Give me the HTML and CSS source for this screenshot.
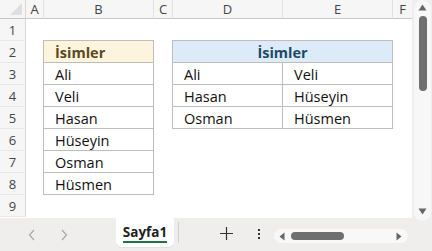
FILE: index.html
```html
<!DOCTYPE html>
<html lang="tr">
<head>
  <meta charset="UTF-8">
  <title>Sayfa1</title>
  <link rel="stylesheet" href="styles.css">
</head>
<body>

  <div class="main">
    <div class="sheet">
      <div class="corner"><span class="corner-tri"></span></div>
      <div class="colhead">A</div>
      <div class="colhead">B</div>
      <div class="colhead">C</div>
      <div class="colhead">D</div>
      <div class="colhead">E</div>
      <div class="colhead last">F</div>

      <div class="rowhead" style="grid-row: 2">1</div>
      <div class="rowhead" style="grid-row: 3">2</div>
      <div class="rowhead" style="grid-row: 4">3</div>
      <div class="rowhead" style="grid-row: 5">4</div>
      <div class="rowhead" style="grid-row: 6">5</div>
      <div class="rowhead" style="grid-row: 7">6</div>
      <div class="rowhead" style="grid-row: 8">7</div>
      <div class="rowhead" style="grid-row: 9">8</div>
      <div class="rowhead" style="grid-row: 10">9</div>

      <div class="list">
        <div class="cell head-yellow">İsimler</div>
        <div class="cell">Ali</div>
        <div class="cell">Veli</div>
        <div class="cell">Hasan</div>
        <div class="cell">Hüseyin</div>
        <div class="cell">Osman</div>
        <div class="cell">Hüsmen</div>
      </div>

      <div class="table2">
        <div class="cell head-blue">İsimler</div>
        <div class="cell">Ali</div>
        <div class="cell">Veli</div>
        <div class="cell">Hasan</div>
        <div class="cell">Hüseyin</div>
        <div class="cell">Osman</div>
        <div class="cell">Hüsmen</div>
      </div>
    </div>

    <div class="vscroll">
      <div class="vtrack">
        <svg class="tri" width="9" height="7" viewBox="0 0 9 7"><path d="M4.5 0.5 L8.5 6.5 L0.5 6.5 Z" fill="#666"/></svg>
        <div class="vthumb"></div>
        <div class="vspace"></div>
        <svg class="tri" width="9" height="7" viewBox="0 0 9 7"><path d="M0.5 0.5 L8.5 0.5 L4.5 6.5 Z" fill="#666"/></svg>
      </div>
    </div>
  </div>

  <div class="bottombar">
    <div class="navs">
      <svg width="8" height="12" viewBox="0 0 8 12"><path d="M6 1 L1.5 6 L6 11" fill="none" stroke="#a8a8a8" stroke-width="1.2"/></svg>
      <svg width="8" height="12" viewBox="0 0 8 12"><path d="M2 1 L6.5 6 L2 11" fill="none" stroke="#a8a8a8" stroke-width="1.2"/></svg>
    </div>
    <div class="tab"><span>Sayfa1</span></div>
    <div class="sep"></div>
    <div class="plus">
      <svg width="13" height="13" viewBox="0 0 13 13"><path d="M6.5 0 V13 M0 6.5 H13" stroke="#333" stroke-width="1.2"/></svg>
    </div>
    <div class="dots">
      <span></span><span></span><span></span>
    </div>
    <div class="hscroll">
      <svg width="6" height="9" viewBox="0 0 6 9"><path d="M5.5 0.5 L5.5 8.5 L0.5 4.5 Z" fill="#666"/></svg>
      <div class="hthumb"></div>
      <div class="hspace"></div>
      <svg width="6" height="9" viewBox="0 0 6 9"><path d="M0.5 0.5 L5.5 4.5 L0.5 8.5 Z" fill="#666"/></svg>
    </div>
  </div>

</body>
</html>
```

FILE: styles.css
```css
body {
  margin: 0;
  padding: 0;
  width: 432px;
  height: 251px;
  overflow: hidden;
  font-family: 'Open Sans', 'Noto Sans', sans-serif;
  background: #efeeed;
}

.main {
  display: flex;
  height: 218px;
}

.sheet {
  width: 412px;
  height: 218px;
  background: #ffffff;
  display: grid;
  grid-template-columns: 26px 18px 110px 19px 110px 110px 19px;
  grid-template-rows: 19px repeat(9, 22px);
  align-content: start;
}

.corner {
  grid-row: 1;
  grid-column: 1;
  background: #f6f6f6;
  border-right: 1px solid #d6d6d6;
  border-bottom: 1px solid #c8c8c8;
  position: relative;
}

.corner-tri {
  position: absolute;
  right: 3px;
  bottom: 3px;
  width: 0;
  height: 0;
  border-left: 12px solid transparent;
  border-bottom: 12px solid #dedede;
}

.colhead {
  grid-row: 1;
  background: #f6f6f6;
  border-right: 1px solid #e0e0e0;
  border-bottom: 1px solid #c8c8c8;
  font-size: 13px;
  color: #444;
  display: flex;
  align-items: center;
  justify-content: center;
  line-height: 1;
}

.colhead.last {
  border-right: none;
}

.rowhead {
  grid-column: 1;
  background: #f6f6f6;
  border-right: 1px solid #d6d6d6;
  border-bottom: 1px solid #e8e8e8;
  font-size: 13px;
  color: #444;
  display: flex;
  align-items: center;
  justify-content: center;
}

.list {
  grid-column: 3;
  grid-row: 3 / 10;
  display: grid;
  grid-template-rows: repeat(7, 22px);
  border-left: 1px solid #bdbdbd;
  border-top: 1px solid #bdbdbd;
  margin-top: -1px;
  margin-left: -1px;
}

.table2 {
  grid-column: 5 / 7;
  grid-row: 3 / 7;
  display: grid;
  grid-template-columns: 110px 110px;
  grid-template-rows: repeat(4, 22px);
  border-left: 1px solid #bdbdbd;
  border-top: 1px solid #bdbdbd;
  margin-top: -1px;
  margin-left: -1px;
}

.cell {
  border-right: 1px solid #bdbdbd;
  border-bottom: 1px solid #bdbdbd;
  padding-left: 11px;
  font-size: 14.5px;
  color: #111;
  display: flex;
  align-items: center;
  padding-top: 1px;
}

.head-yellow {
  background: #fcf4dc;
  color: #5a4a1e;
  font-weight: bold;
}

.head-blue {
  grid-column: 1 / 3;
  background: #dcebf7;
  color: #1c4a66;
  font-weight: bold;
  justify-content: center;
  padding-left: 0;
}

.vscroll {
  width: 20px;
  height: 218px;
  background: #efeeed;
  display: flex;
  justify-content: center;
}

.vtrack {
  width: 17px;
  height: 221px;
  margin-left: 1px;
  background: #f7f7f7;
  border-radius: 9px;
  display: flex;
  flex-direction: column;
  align-items: center;
  padding-top: 4px;
  box-sizing: border-box;
}

.tri {
  flex-shrink: 0;
}

.vthumb {
  width: 8px;
  height: 75px;
  margin-top: 5px;
  background: #6f6f6f;
  border-radius: 4px;
}

.vspace {
  flex: 1;
}

.vtrack svg:last-child {
  margin-bottom: 6px;
}

.bottombar {
  height: 33px;
  display: flex;
  align-items: flex-start;
}

.navs {
  display: flex;
  gap: 24px;
  margin-left: 28px;
  width: 88px;
  padding-top: 11px;
}

.navs svg,
.plus svg,
.hscroll svg {
  display: block;
}

.tab {
  width: 58px;
  height: 29px;
  background: #ffffff;
  border-radius: 0 0 6px 6px;
  display: flex;
  justify-content: center;
  box-shadow: 0 1px 1px rgba(0, 0, 0, 0.06);
}

.tab span {
  font-size: 13.5px;
  font-weight: bold;
  color: #222;
  margin-top: 5px;
  height: 18px;
  border-bottom: 2px solid #1f7244;
  line-height: 18px;
}

.sep {
  width: 1px;
  height: 21px;
  background: #cfcfcf;
  margin-top: 4px;
  margin-left: 4px;
}

.plus {
  margin-left: 41px;
  padding-top: 9px;
}

.dots {
  margin-left: 25px;
  padding-top: 11px;
  display: flex;
  flex-direction: column;
  gap: 2px;
}

.dots span {
  width: 2px;
  height: 2px;
  background: #333;
}

.hscroll {
  margin-left: 14px;
  margin-top: 11px;
  width: 134px;
  height: 14px;
  background: #f8f8f8;
  border-radius: 7px;
  display: flex;
  align-items: center;
  padding: 0 6px 0 5px;
  box-sizing: border-box;
}

.hthumb {
  width: 53px;
  height: 8px;
  margin-left: 6px;
  background: #6f6f6f;
  border-radius: 4px;
}

.hspace {
  flex: 1;
}
```
